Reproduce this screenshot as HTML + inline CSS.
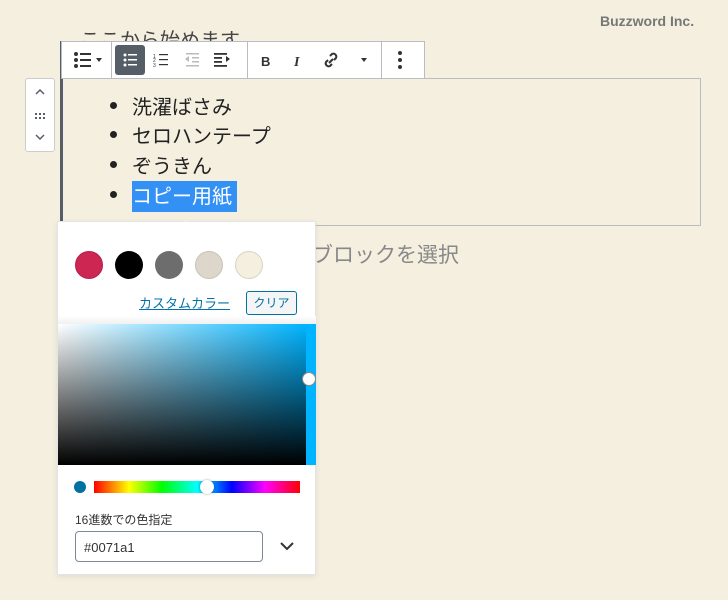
<!DOCTYPE html>
<html><head><meta charset="utf-8"><style>
*{box-sizing:border-box;margin:0;padding:0}
body{width:728px;height:600px;background:#f5efe0;position:relative;overflow:hidden;font-family:"Liberation Sans","Noto Sans CJK JP",sans-serif;}
.abs{position:absolute}
.tb{left:61px;top:41px;width:364px;height:38px;background:#fff;border:1px solid #b9bcc0;display:flex}
.grp{height:36px;border-right:1px solid #b9bcc0;position:relative}
.ic{position:absolute}
.li{font-size:20px;color:#222;position:absolute;left:132px}
.dot{position:absolute;left:110px;width:7px;height:7px;border-radius:50%;background:#222}
.sw{position:absolute;top:251px;width:28px;height:28px;border-radius:50%}
</style></head><body>
<div class="abs" style="left:600px;top:13px;font-size:14px;color:#777;font-weight:bold">Buzzword Inc.</div>
<div class="abs" style="left:80px;top:24px;font-size:20px;color:#444">ここから始めます</div>
<!-- block -->
<div class="abs" style="left:62px;top:78px;width:639px;height:148px;border:1px solid #b9bcc0;border-left:none"></div>
<div class="abs" style="left:60px;top:41px;width:3px;height:180px;background:#555d66"></div>
<!-- mover -->
<div class="abs" style="left:25px;top:78px;width:30px;height:74px;background:#fff;border:1px solid #ccc;border-radius:3px">
<svg width="30" height="74" style="position:absolute;left:-1px;top:-1px" fill="none" stroke="#555d66" stroke-width="1.5"><path d="M11 16l4-4 4 4"/><path d="M11 57l4 4 4-4"/><g fill="#555d66" stroke="none"><rect x="10" y="35" width="2" height="2"/><rect x="14" y="35" width="2" height="2"/><rect x="18" y="35" width="2" height="2"/><rect x="10" y="39" width="2" height="2"/><rect x="14" y="39" width="2" height="2"/><rect x="18" y="39" width="2" height="2"/></g></svg>
</div>
<!-- toolbar -->
<div class="abs tb">
<div class="grp" style="width:50px">
<svg class="ic" width="50" height="36" style="left:0;top:0"><g fill="#333"><circle cx="14" cy="12" r="2"/><circle cx="14" cy="18" r="2"/><circle cx="14" cy="24" r="2"/><rect x="18" y="11" width="11" height="2"/><rect x="18" y="17" width="11" height="2"/><rect x="18" y="23" width="11" height="2"/><path d="M34 16h6l-3 4z"/></g></svg>
</div>
<div class="grp" style="width:136px">
<div class="ic" style="left:3px;top:3px;width:30px;height:30px;background:#555d66;border-radius:3px"></div>
<svg class="ic" width="136" height="36" style="left:0;top:0"><g fill="#fff"><circle cx="13" cy="13" r="1.5"/><circle cx="13" cy="18" r="1.5"/><circle cx="13" cy="23" r="1.5"/><rect x="16" y="12" width="9" height="1.5"/><rect x="16" y="17" width="9" height="1.5"/><rect x="16" y="22" width="9" height="1.5"/></g>
<g fill="#333"><text x="41" y="16" font-size="5">1</text><text x="41" y="20" font-size="5">2</text><text x="41" y="25" font-size="5">3</text><rect x="47" y="12" width="9" height="1.2"/><rect x="47" y="17" width="9" height="1.2"/><rect x="47" y="22" width="9" height="1.2"/></g>
<g fill="#bbb"><rect x="74" y="11" width="13" height="1.5"/><rect x="80" y="15" width="7" height="1.5"/><rect x="80" y="19" width="7" height="1.5"/><rect x="74" y="23" width="13" height="1.5"/><path d="M73 17l4-3v6z"/></g>
<g fill="#333"><rect x="102" y="11" width="13" height="1.8"/><rect x="102" y="15" width="8" height="1.8"/><rect x="102" y="19" width="8" height="1.8"/><rect x="102" y="23" width="13" height="1.8"/><path d="M118 17l-4-3v6z"/></g></svg>
</div>
<div class="grp" style="width:134px">
<svg class="ic" width="134" height="36" style="left:0;top:0"><text x="13" y="24" font-size="13" font-weight="bold" fill="#333" font-family="Liberation Sans">B</text><text x="46" y="24" font-size="14" font-style="italic" font-weight="bold" fill="#333" font-family="Liberation Serif">I</text>
<g fill="none" stroke="#333" stroke-width="2"><path d="M82 14l2-2a3 3 0 014 4l-2 2"/><path d="M80 18l-2 2a3 3 0 004 4l2-2"/><path d="M81 21l4-4"/></g>
<path d="M113 16h6l-3 4z" fill="#333"/></svg>
</div>
<div class="grp" style="width:42px;border-right:none">
<svg class="ic" width="42" height="36"><g fill="#333"><circle cx="18" cy="11" r="2"/><circle cx="18" cy="18" r="2"/><circle cx="18" cy="25" r="2"/></g></svg>
</div>
</div>
<!-- list -->
<div class="dot" style="top:102px"></div><div class="li" style="top:91px">洗濯ばさみ</div>
<div class="dot" style="top:131px"></div><div class="li" style="top:120px">セロハンテープ</div>
<div class="dot" style="top:161px"></div><div class="li" style="top:150px">ぞうきん</div>
<div class="dot" style="top:191px"></div><div class="abs" style="left:132px;top:181px;width:105px;height:31px;background:#3390f5"></div><div class="li" style="top:180px;color:#fff">コピー用紙</div>
<div class="abs" style="left:312px;top:239px;font-size:21px;color:#888">ブロックを選択</div>
<!-- popover -->
<div class="abs" style="left:57px;top:221px;width:259px;height:354px;background:#fff;border:1px solid #e2e4e7;box-shadow:0 2px 6px rgba(0,0,0,.08)"></div>
<div class="abs" style="left:177px;top:212px;width:0;height:0;border:9px solid transparent;border-bottom-color:#fff"></div>
<div class="sw" style="left:75px;background:#cd2653;border:1px solid #b02048"></div>
<div class="sw" style="left:115px;background:#000"></div>
<div class="sw" style="left:155px;background:#6d6d6d"></div>
<div class="sw" style="left:195px;background:#dcd7ca;border:1px solid #c8c2b4"></div>
<div class="sw" style="left:235px;background:#f5efe0;border:1px solid #d8d2c2"></div>
<div class="abs" style="left:139px;top:293px;font-size:13px;color:#0073aa;text-decoration:underline">カスタムカラー</div>
<div class="abs" style="left:246px;top:291px;width:51px;height:24px;border:1px solid #0071a1;border-radius:3px;background:#f3f5f6;font-size:12px;color:#0071a1;text-align:center;line-height:22px">クリア</div>
<div class="abs" style="left:58px;top:316px;width:258px;height:8px;background:linear-gradient(#fff,#f0f0f0)"></div>
<div class="abs" style="left:176px;top:316px;width:0;height:0;border:8px solid transparent;border-bottom-color:#fff"></div>
<div class="abs" style="left:58px;top:324px;width:248px;height:141px;background:linear-gradient(to top,#000,rgba(0,0,0,0)),linear-gradient(to right,#fff,#00b4ff)"></div>
<div class="abs" style="left:306px;top:324px;width:10px;height:141px;background:#00b4ff"></div>
<div class="abs" style="left:302px;top:372px;width:14px;height:14px;border-radius:50%;background:#fff;border:1px solid #888"></div>
<div class="abs" style="left:74px;top:481px;width:12px;height:12px;border-radius:50%;background:#0071a1"></div>
<div class="abs" style="left:94px;top:481px;width:206px;height:12px;background:linear-gradient(to right,#f00,#ff0 17%,#0f0 33%,#0ff 50%,#00f 67%,#f0f 83%,#f00)"></div>
<div class="abs" style="left:200px;top:480px;width:14px;height:14px;border-radius:50%;background:#fff;box-shadow:0 0 2px rgba(0,0,0,.4)"></div>
<div class="abs" style="left:75px;top:511px;font-size:12px;color:#333">16進数での色指定</div>
<div class="abs" style="left:75px;top:531px;width:188px;height:31px;border:1px solid #7e8993;border-radius:4px;font-size:13px;color:#333;padding:8px 0 0 8px">#0071a1</div>
<svg class="abs" style="left:279px;top:540px" width="16" height="12" fill="none" stroke="#333" stroke-width="2"><path d="M2 3l6 6 6-6"/></svg>
</body></html>
